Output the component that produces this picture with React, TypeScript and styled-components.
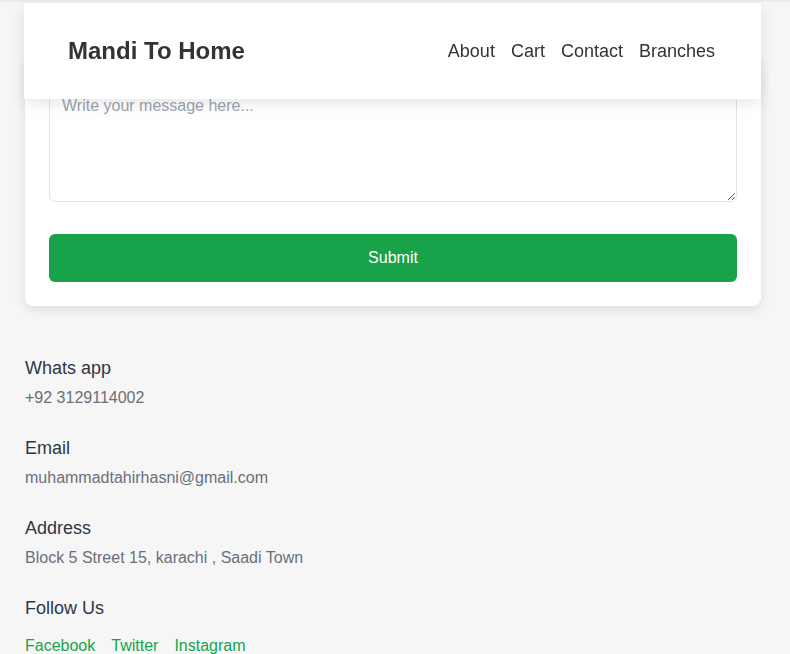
import React from "react";
import styled, { createGlobalStyle } from "styled-components";

const GlobalStyle = createGlobalStyle`
  html, body {
    margin: 0;
    padding: 0;
    background: #f6f6f6;
    font-family: "Liberation Sans", Arial, sans-serif;
  }
  body {
    border-top: 2px solid #ececec;
  }
  * { box-sizing: border-box; }
`;

const Header = styled.header`
  position: fixed;
  top: 3px;
  left: 24px;
  width: 737px;
  height: 96px;
  background: #ffffff;
  box-shadow: 0 4px 14px rgba(0, 0, 0, 0.1);
  display: flex;
  align-items: center;
  justify-content: space-between;
  padding: 0 46px 0 44px;
  z-index: 10;
`;

const Logo = styled.div`
  font-size: 24px;
  font-weight: 700;
  color: #333333;
`;

const Nav = styled.nav`
  display: flex;
  gap: 16px;
`;

const NavLink = styled.a`
  font-size: 18px;
  color: #333333;
  text-decoration: none;
`;

const Page = styled.main`
  padding: 56px 29px 0 25px;
`;

const Card = styled.section`
  background: #ffffff;
  border-radius: 8px;
  box-shadow: 0 4px 12px rgba(0, 0, 0, 0.1);
  padding: 24px;
  display: flex;
  flex-direction: column;
  gap: 32px;
`;

const MessageArea = styled.textarea`
  width: 100%;
  height: 120px;
  border: 1px solid #e2e4ea;
  border-radius: 6px;
  padding: 14px 12px 12px;
  font-family: "Liberation Sans", Arial, sans-serif;
  font-size: 16px;
  color: #333;
  resize: vertical;
  display: block;
  &::placeholder {
    color: #9ca3af;
  }
`;

const SubmitButton = styled.button`
  width: 100%;
  height: 48px;
  border: none;
  border-radius: 6px;
  background: #18a34a;
  color: #ffffff;
  font-family: "Liberation Sans", Arial, sans-serif;
  font-size: 16px;
  cursor: pointer;
`;

const Info = styled.section`
  padding-top: 52px;
  display: flex;
  flex-direction: column;
  gap: 31px;
`;

const InfoGroup = styled.div`
  display: flex;
  flex-direction: column;
  gap: 10px;
`;

const InfoTitle = styled.h3`
  margin: 0;
  font-size: 18px;
  font-weight: 400;
  color: #2d3748;
`;

const InfoValue = styled.p`
  margin: 0;
  font-size: 16px;
  color: #6b6f7a;
`;

const Socials = styled.div`
  display: flex;
  gap: 16px;
  padding-top: 8px;
`;

const SocialLink = styled.a`
  font-size: 16px;
  color: #18a34a;
  text-decoration: none;
`;

export default function App() {
  return (
    <>
      <GlobalStyle />
      <Header>
        <Logo>Mandi To Home</Logo>
        <Nav>
          <NavLink href="#">About</NavLink>
          <NavLink href="#">Cart</NavLink>
          <NavLink href="#">Contact</NavLink>
          <NavLink href="#">Branches</NavLink>
        </Nav>
      </Header>
      <Page>
        <Card>
          <MessageArea placeholder="Write your message here..." />
          <SubmitButton>Submit</SubmitButton>
        </Card>
        <Info>
          <InfoGroup>
            <InfoTitle>Whats app</InfoTitle>
            <InfoValue>+92 3129114002</InfoValue>
          </InfoGroup>
          <InfoGroup>
            <InfoTitle>Email</InfoTitle>
            <InfoValue>muhammadtahirhasni@gmail.com</InfoValue>
          </InfoGroup>
          <InfoGroup>
            <InfoTitle>Address</InfoTitle>
            <InfoValue>Block 5 Street 15, karachi , Saadi Town</InfoValue>
          </InfoGroup>
          <InfoGroup>
            <InfoTitle>Follow Us</InfoTitle>
            <Socials>
              <SocialLink href="#">Facebook</SocialLink>
              <SocialLink href="#">Twitter</SocialLink>
              <SocialLink href="#">Instagram</SocialLink>
            </Socials>
          </InfoGroup>
        </Info>
      </Page>
    </>
  );
}
